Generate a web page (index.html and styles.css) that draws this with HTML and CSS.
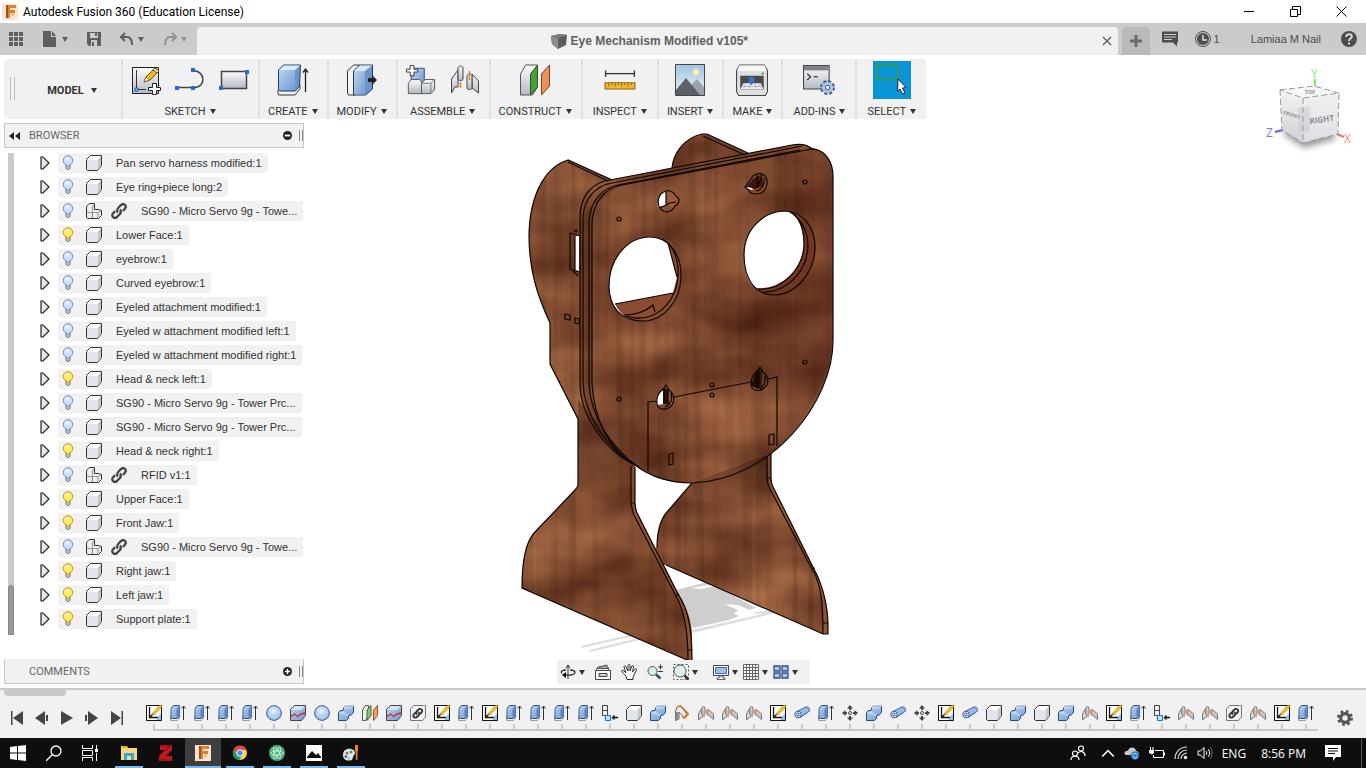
FILE: index.html
```html
<!DOCTYPE html>
<html lang="en">
<head>
    <meta charset="UTF-8">
    <title>Autodesk Fusion 360 (Education License)</title>
    <link rel="stylesheet" href="styles.css">
</head>
<body>
<svg class="sprite" aria-hidden="true">
    <defs>
        <linearGradient id="blue" x1="0" y1="0" x2="1" y2="1"><stop offset="0" stop-color="#bcd3ee"/><stop offset="1" stop-color="#6f9bd0"/></linearGradient>
        <linearGradient id="grey" x1="0" y1="0" x2="0" y2="1"><stop offset="0" stop-color="#fdfdfe"/><stop offset="1" stop-color="#b3b8c4"/></linearGradient>
        <linearGradient id="sky" x1="0" y1="0" x2="0" y2="1"><stop offset="0" stop-color="#9fc6e2"/><stop offset="1" stop-color="#eef4f8"/></linearGradient>
        <radialGradient id="ball" cx=".45" cy=".35" r=".6"><stop offset="0" stop-color="#f1f7ff"/><stop offset="1" stop-color="#8db3e0"/></radialGradient>
    </defs>

    <!-- app logo -->
    <symbol id="i-fusion" viewBox="0 0 16 16"><path d="M0 0h16v16H0z" fill="#fbe3cd"/><path d="M4 1h10v3H8v2h5v3H8v5H4z" fill="#d9822f"/><path d="M4 1h2v13H4z" fill="#9c5316"/><path d="M9 10l3-1v3h-3z" fill="#f3bb85"/></symbol>

    <!-- tab bar -->
    <symbol id="i-apps" viewBox="0 0 14 14"><path d="M0 0h4v4H0zM5 0h4v4H5zM10 0h4v4h-4zM0 5h4v4H0zM5 5h4v4H5zM10 5h4v4h-4zM0 10h4v4H0zM5 10h4v4H5zM10 10h4v4h-4z" fill="currentColor"/></symbol>
    <symbol id="i-file" viewBox="0 0 14 16"><path d="M0 0h8v6h5v10H0zM9 0l4 5H9z" fill="currentColor"/></symbol>
    <symbol id="i-save" viewBox="0 0 14 14"><path d="M0 0h14v14H2l-2-2z" fill="currentColor"/><path d="M3 1h8v5H3zM4 8h6v6H4z" fill="#cbcbcb"/><path d="M8 1h2v3H8zM5 10h2v4H5z" fill="currentColor"/></symbol>
    <symbol id="i-undo" viewBox="0 0 14 14"><path d="M5 1L1 5l4 4M1 5h6c4 0 5 3 5 8" fill="none" stroke="currentColor" stroke-width="2"/></symbol>
    <symbol id="i-redo" viewBox="0 0 14 14"><path d="M9 1l4 4-4 4M13 5H7c-4 0-5 3-5 8" fill="none" stroke="currentColor" stroke-width="2"/></symbol>
    <symbol id="i-comment" viewBox="0 0 16 15"><path d="M0 0h16v11h-1v4l-4-4H0z" fill="currentColor"/><path d="M2 3h12M2 5.500h12M2 8h8" stroke="#cbcbcb"/></symbol>
    <symbol id="i-clock" viewBox="0 0 16 16"><circle cx="8" cy="8" r="7.500" fill="none" stroke="currentColor"/><circle cx="8" cy="8" r="6" fill="currentColor"/><path d="M8 4v5h4" fill="none" stroke="#e3e3e3" stroke-width="1.500"/></symbol>
    <symbol id="i-help" viewBox="0 0 16 16"><circle cx="8" cy="8" r="8" fill="currentColor"/><path d="M5.200 6c0-4 5.800-3.500 5.600-.3C10.700 7.700 8 7.500 8 10" fill="none" stroke="#ddd" stroke-width="2"/><path d="M7 11.500h2v2H7z" fill="#ddd"/></symbol>
    <symbol id="i-cube" viewBox="0 0 16 16"><path d="M0 3l9-2 7 1-1 10-8 4-6-5z" fill="#5c5c5c"/><path d="M0 3l7 2v11l-6-5z" fill="#8d8d8d"/><path d="M0 3l9-2 7 1-9 3z" fill="#7b7b7b"/></symbol>

    <!-- ribbon -->
    <symbol id="i-newsketch" viewBox="0 0 30 30"><path d="M1.500 2.500h26v26h-26z" fill="url(#grey)" stroke="#222"/><path d="M5.500 5v19.500H15" fill="none" stroke="#333"/><path d="M4 23h3v3H4z" fill="#8fc0ff" stroke="#1560c0"/><path d="M13 17l2-5 9-9 4 3-9 9z" fill="#f5b915" stroke="#6b4a0e"/><path d="M24 3l4 3-2 2-4-3z" fill="#efe0d2" stroke="#6b4a0e"/><path d="M13 17l2-5 3 3z" fill="#fff" stroke="#6b4a0e" stroke-width=".600"/><path d="M21.500 18.500h4v4h4v3h-4v4h-4v-4h-4v-3h4z" fill="#fff" stroke="#222"/></symbol>
    <symbol id="i-line" viewBox="0 0 30 30"><path d="M2 22.500h17c12 0 12-16.500-1-17" fill="none" stroke="#444" stroke-width="1.500"/><path d="M0 21h4v4H0zM16 21h4v4h-4zM16 3h4v4h-4z" fill="#2f67d0"/></symbol>
    <symbol id="i-rect" viewBox="0 0 30 30"><path d="M2.500 6.500h25v17h-25z" fill="url(#grey)" stroke="#444" stroke-width="1.500"/><path d="M0 21h4v4H0zM26 5h4v4h-4z" fill="#2f67d0"/></symbol>
    <symbol id="i-extrude" viewBox="0 0 32 32"><path d="M1 26l4-5h18v4l-5 6H2l-1-1z" fill="#f0f0f0" stroke="#333"/><path d="M1.500 6l5-5h17l-1 21-4 5h-16l-1-1z" fill="#6d96c8" stroke="#233e68"/><path d="M2 6h16v20H2z" fill="url(#blue)"/><path d="M2 6l5-4.500h16L18 6z" fill="#dcebfa"/><path d="M28.500 28V6M26 8.500L28.500 5 31 8.500" fill="none" stroke="#222" stroke-width="1.300"/></symbol>
    <symbol id="i-presspull" viewBox="0 0 32 32"><path d="M1.500 7l6-6h6v26l-4 4h-7l-1-2z" fill="#f3f3f3" stroke="#333"/><path d="M7.500 7l6-6h13v24l-7 6h-12z" fill="#6d96c8" stroke="#233e68"/><path d="M8 7h11v23.500H8z" fill="url(#blue)"/><path d="M8 7l6-5.500h12L19 7z" fill="#dcebfa"/><path d="M22 14h4v-3l5 5-5 5v-3h-4z" fill="#222"/></symbol>
    <symbol id="i-component" viewBox="0 0 32 32"><path d="M5.500 7.500l3-4h11v13l-3 4h-11z" fill="url(#blue)" stroke="#2c4f86"/><path d="M2.500 19.500l3-4h9l3 4v11h-15z" fill="url(#grey)" stroke="#555"/><path d="M16.500 19.500l4-4h10v11l-4 4h-10z" fill="url(#grey)" stroke="#555"/><path d="M16.500 19.500h10l4-4M26.500 19.500v11" fill="none" stroke="#777"/><path d="M4.500.500h4v4h4v3h-4v4h-4v-4h-4v-3h4z" fill="#fff" stroke="#333"/></symbol>
    <symbol id="i-joint" viewBox="0 0 30 30"><path d="M1.500 14L8 5v17H5l-3.500 6z" fill="url(#grey)" stroke="#444"/><path d="M8 3c0-2.500 5-2.500 5 0v11c0 2-5 2-5 0z" fill="url(#grey)" stroke="#444"/><path d="M22 9l6.500 7v12L22 23z" fill="url(#grey)" stroke="#444"/><path d="M17 11c0-2.500 5-2.500 5 0v12c0 2-5 2-5 0z" fill="url(#grey)" stroke="#444"/><path d="M10.500 17v6M19.500 6v9" stroke="#f07a1a" stroke-width="1.500"/></symbol>
    <symbol id="i-planes" viewBox="0 0 32 32"><path d="M1.500 10l5-9h12v22l-5 8h-12z" fill="url(#grey)" stroke="#555"/><path d="M11.500 10l7-9v22l-7 8z" fill="#4c9a3c" stroke="#255c1c"/><path d="M22.500 10l8-9v21l-8 9z" fill="#e8925e" stroke="#8d3d17"/></symbol>
    <symbol id="i-measure" viewBox="0 0 30 30"><path d="M1.500 6v6M28.500 6v6M1.500 9h27" stroke="#333" stroke-width="1.300"/><path d="M1 17.500h28v6H1z" fill="#f0b92c" stroke="#8d6711"/><path d="M4.500 18v3M7.500 18v2M10.500 18v3M13.500 18v2M16.500 18v3M19.500 18v2M22.500 18v3M25.500 18v2" stroke="#8d6711"/></symbol>
    <symbol id="i-image" viewBox="0 0 30 32"><path d="M.500.500h29v31H.500z" fill="url(#sky)" stroke="#444"/><circle cx="21" cy="8" r="3" fill="#fff3c5" stroke="#ffe08a"/><path d="M15 22l7-7 7 8v8H16z" fill="#9ba2a9"/><path d="M1 26l10-12 14 17H1z" fill="#5b6069"/></symbol>
    <symbol id="i-printer" viewBox="0 0 30 30"><path d="M.500 6l3-5h23l3 5v20l-2 3.500h-25L.500 26z" fill="#dedfe1" stroke="#444"/><path d="M3 1.500h24l2 5H1z" fill="#f8f8f8"/><circle cx="25" cy="9" r="1" fill="#1a9a2a"/><path d="M4 11h22v13H4z" fill="#4a4a4a"/><path d="M7 18h16l3 6H4z" fill="#eee"/><path d="M9 19l-2 4M13 19l-1 4M18 19l1 4M21 19l3 4M6 21h18" stroke="#999" stroke-width=".600"/><path d="M12 12h5v5l-2.500 3-2.500-3z" fill="#3d73c6"/></symbol>
    <symbol id="i-script" viewBox="0 0 30 30"><path d="M.500 1.500h24v22H.500z" fill="url(#grey)" stroke="#444"/><path d="M1 2h23v4H1z" fill="#7b8088"/><path d="M4 9l3 3-3 3M10 12h4" fill="none" stroke="#222"/><circle cx="23" cy="22" r="5" fill="none" stroke="#3f5f8f" stroke-width="4" stroke-dasharray="2.500 1.400"/><circle cx="23" cy="22" r="4" fill="#eef3fa" stroke="#a9c0df" stroke-width="2.500"/><circle cx="23" cy="22" r="2" fill="#fff" stroke="#3f5f8f"/></symbol>
    <symbol id="i-select" viewBox="0 0 38 38"><path d="M4.500 4.500h20v14h-20z" fill="none" stroke="#3f9b1e" stroke-width="1.300"/><path d="M25 18l8 8.500-3.500.500 2.500 5-2.500 1-2.500-5-2.500 2.500z" fill="#fff" stroke="#222"/></symbol>

    <!-- browser tree -->
    <symbol id="i-arrow" viewBox="0 0 10 14"><path d="M1 1h2l6 6-6 6H1z" fill="#e6e6e6" stroke="#222" stroke-width="1.200"/></symbol>
    <symbol id="i-bulb" viewBox="0 0 12 16"><path d="M4 10h4v3c0 2-4 2-4 0z" fill="#c9c9c9" stroke="#555" stroke-width=".800"/><circle cx="6" cy="5.500" r="4.800"/><path d="M3.500 9l1 2h3l1-2"/><circle cx="5" cy="4" r="2" fill="#fff" stroke="none" opacity=".6"/></symbol>
    <symbol id="i-box" viewBox="0 0 16 16"><path d="M.500 4.500l4-4h11v10l-4 5h-10l-1-1z" fill="#fff" stroke="#333"/><path d="M1 5h10v10H1z" fill="#e1e4ea"/><path d="M11.500 5l3.500-4v9l-3.500 5z" fill="#c4c8d0"/></symbol>
    <symbol id="i-boxes" viewBox="0 0 16 16"><path d="M.500 3.500l3-3h5v6h4l3 1v5l-3 3H2l-1.500-1z" fill="#eceef2" stroke="#333"/><path d="M1 9.500h11l3-2M6.500 4v11M6.500 4l2-3M12 10v5" fill="none" stroke="#777" stroke-width=".800"/></symbol>
    <symbol id="i-link" viewBox="0 0 16 16"><path d="M7 9.500C5 7.500 6 6 8 4l2-2c3-2.500 6 1 4 3.500L12 8M9 6.500c2 2 1 3.500-1 5.500l-2 2c-3 2.500-6-1-4-3.500L4 8" fill="none" stroke="#444" stroke-width="2.300"/></symbol>
    <symbol id="i-collapse" viewBox="0 0 11 8"><path d="M5 0v8L0 4zM11 0v8L6 4z" fill="#222"/></symbol>
    <symbol id="i-minus" viewBox="0 0 10 10"><circle cx="5" cy="5" r="5" fill="#222"/><path d="M2 5h6" stroke="#fff" stroke-width="2"/></symbol>
    <symbol id="i-plus" viewBox="0 0 10 10"><circle cx="5" cy="5" r="5" fill="#222"/><path d="M2 5h6M5 2v6" stroke="#fff" stroke-width="1.500"/></symbol>

    <!-- navigation bar -->
    <symbol id="i-orbit" viewBox="0 0 16 16"><path d="M8 15V1M6 4l2-3 2 3" fill="none" stroke="#333"/><path d="M10 6c6 0 7 4 1 5-3 .500-6 0-8-.500M6 6C2 6 0 8 2 9.500" fill="none" stroke="#333" stroke-width="1.300"/><path d="M2 11l4-3v6z" fill="#111"/></symbol>
    <symbol id="i-lookat" viewBox="0 0 16 16"><path d="M.500 6.500h15v9H.500z" fill="#fff" stroke="#444"/><path d="M4 9.500h8v3H4z" fill="#c9d1dc" stroke="#444"/><path d="M1 6l2-3h10l1 3M4 3l8-2v2M2 4.500h11" fill="none" stroke="#555"/></symbol>
    <symbol id="i-pan" viewBox="0 0 16 16"><path d="M5 12L1 8c-1-2 1-2 2-1l2 2-2-6c0-2 2-1 2 0l2 4V1.500c0-1.500 2-1.500 2 0V7l2-5c1-1 2 0 1.500 1L11.500 8 14 5c1-1 2 0 1.500 1L12 13v2.500H6z" fill="#fff" stroke="#333"/></symbol>
    <symbol id="i-zoom" viewBox="0 0 16 16"><circle cx="5.500" cy="7" r="4.500" fill="#d9ecec" stroke="#555"/><path d="M9 10.500l4.500 4" stroke="#334d63" stroke-width="2.500"/><path d="M11 3h5M13.500.500v5M11 7.500h5" stroke="#333"/></symbol>
    <symbol id="i-fit" viewBox="0 0 16 16"><path d="M.500.500h15v15H.500z" fill="none" stroke="#555" stroke-dasharray="2 2"/><circle cx="7" cy="7" r="6" fill="#e1efef" stroke="#555"/><path d="M11.500 11.500l4 4" stroke="#333" stroke-width="2.500"/></symbol>
    <symbol id="i-display" viewBox="0 0 16 16"><path d="M.500 1.500h15v10H.500z" fill="#fff" stroke="#445"/><path d="M2.500 3.500h11v6h-11z" fill="#9dbfe8" stroke="#3c69a5"/><path d="M6 12h4v2h2v1.500H4V14h2z" fill="#eee" stroke="#445" stroke-width=".800"/></symbol>
    <symbol id="i-grid" viewBox="0 0 16 16"><path d="M.500.500h15v15H.500zM3.500 0v16M6.500 0v16M9.500 0v16M12.500 0v16M0 3.500h16M0 6.500h16M0 9.500h16M0 12.500h16" fill="#fff" stroke="#666"/></symbol>
    <symbol id="i-views" viewBox="0 0 16 14"><path d="M1 1h6v5H1zM9 1h6v5H9zM1 8h6v5H1zM9 8h6v5H9z" fill="#a9c4e6" stroke="#334f7c" stroke-width="1.300"/></symbol>

    <!-- timeline -->
    <symbol id="t-sketch" viewBox="0 0 16 16"><path d="M.500.500h15v15H.500z" fill="#fff" stroke="#111"/><path d="M10 15l5-7v7z" fill="#9db9e8"/><path d="M3.500 2v10.500H12M3.500 12.500l4-4" fill="none" stroke="#111" stroke-width="1.300"/><path d="M6 10l1.500-3L14 0l2 1.500L9 9z" fill="#f8c21c" stroke="#b57b0f" stroke-width=".600"/></symbol>
    <symbol id="t-extrude" viewBox="0 0 16 16"><path d="M.500 12l1-2h8v3l-2 2.500h-7z" fill="#f2f2f2" stroke="#777" stroke-width=".700"/><path d="M1 3.500L3.500.500h6V11l-2 2.500H1z" fill="url(#blue)" stroke="#365b92"/><path d="M6.500 4l3-3v9l-3 3z" fill="#5e87bd"/><path d="M13.500 15V1M11.500 3.500l2-2.500 2 2.500" fill="none" stroke="#333"/></symbol>
    <symbol id="t-sphere" viewBox="0 0 16 16"><circle cx="8" cy="8" r="7.400" fill="url(#ball)" stroke="#3f639b"/><circle cx="8" cy="8" r="5" fill="none" stroke="#c8dcf5"/></symbol>
    <symbol id="t-split" viewBox="0 0 16 16"><path d="M.500 4.500l4-4h11v10l-4 5H.500z" fill="url(#blue)" stroke="#444"/><path d="M1 5l4-4h10l-4 4z" fill="#d7e6f7"/><path d="M.500 12l4-3 3 2.500L11 9l4.500-1" fill="none" stroke="#e0201c" stroke-width="1.300"/></symbol>
    <symbol id="t-combine" viewBox="0 0 16 16"><path d="M.500 7.500l2-2h3v-3l2-2h8v7l-3 3h-2v3l-2 2h-8z" fill="url(#blue)" stroke="#28497d"/><path d="M5.500 5.500v3l5 2M7.500.500h8l-2 2.500h-8zM1 8h4" fill="none" stroke="#e4effb" stroke-width=".800"/></symbol>
    <symbol id="t-planes" viewBox="0 0 16 16"><path d="M.500 5l3-4.500h3v10l-3 5h-3z" fill="#eee" stroke="#555"/><path d="M5 5l4-4.500v10l-4 5z" fill="#8fbd84" stroke="#3b6a32"/><path d="M11.500 5l4-4.500v10l-4 5z" fill="#eda277" stroke="#a0501f"/></symbol>
    <symbol id="t-link" viewBox="0 0 16 16"><path d="M.500 4l3-3.500h12V12l-3 3.500H.500z" fill="#f3f3f3" stroke="#777"/><path d="M7 9.500C5.500 8 6 7 7.500 5.500S11 3 12 5s-1 3-2 4M8.500 7c1.500 1.500 1 2.500-.500 4s-3.500 2.500-4.500.500 1-3 2-4" fill="none" stroke="#333" stroke-width="1.800"/></symbol>
    <symbol id="t-align" viewBox="0 0 16 16"><path d="M.500.500h5v10h-5zM.500 5.500h5" fill="#eef3f3" stroke="#444"/><path d="M3.500 10.500h5v5h-5z" fill="#bfe2fb" stroke="#0f74c4"/><path d="M10 12.500h6M12.500 10.500l-2 2 2 2" fill="none" stroke="#111" stroke-width="1.300"/></symbol>
    <symbol id="t-joint" viewBox="0 0 16 16"><path d="M.500 9L4 2.500c1-1.500 3-1 3 .500v6L5 11l-4.500 4z" fill="#d2d5da" stroke="#777"/><path d="M9 6c0-1.500 2.500-1.500 3 0l3.500 3v5.500L11.500 11 9 9.500z" fill="#c2c6cd" stroke="#777"/><path d="M4 4v6" stroke="#666"/><path d="M6 9v3M9.500 4v4" stroke="#f07a1a" stroke-width="1.300"/></symbol>
    <symbol id="t-jointhl" viewBox="0 0 16 16"><path d="M3 4l3-2 7 7-4 4" fill="none" stroke="#f08a1c" stroke-width="4" stroke-linejoin="round"/><path d="M3 3c1-2 4-2 5 0l5 6-3 3.500L5 7v7l-3.500 1.500V6z" fill="#ececec" stroke="#666"/><path d="M1.500 7h3v7l-3 1z" fill="#888"/></symbol>
    <symbol id="t-pipe" viewBox="0 0 16 16"><path d="M3 6.500L12 2c3-.500 5 3 2.500 5L6 12.500z" fill="url(#blue)" stroke="#3b5f96"/><ellipse cx="4" cy="9.500" rx="3.200" ry="3.300" fill="#dce9f8" stroke="#3b5f96"/><ellipse cx="4" cy="9.500" rx="1.200" ry="1.400" fill="#fff" stroke="#3b5f96"/></symbol>
    <symbol id="t-move" viewBox="0 0 16 16"><path d="M8 0l3 3.500H9V5H7V3.500H5zM8 16l-3-3.500h2V11h2v1.500h2zM0 8l3.500-3v2H5v2H3.500v2zM16 8l-3.500 3V9H11V7h1.500V5z" fill="#444"/><circle cx="8" cy="8" r="1.500" fill="#fff" stroke="#444"/></symbol>
    <symbol id="t-first" viewBox="0 0 14 14"><path d="M1 0h1.500v14H1zM13 0v14L3 7z" fill="currentColor"/></symbol>
    <symbol id="t-prev" viewBox="0 0 14 14"><path d="M10 0v14L0 7zM11 4h2v6h-2z" fill="currentColor"/></symbol>
    <symbol id="t-play" viewBox="0 0 14 14"><path d="M1 0l12 7-12 7z" fill="currentColor"/></symbol>
    <symbol id="t-next" viewBox="0 0 14 14"><path d="M3 0v14l10-7zM0 4h2v6H0z" fill="currentColor"/></symbol>
    <symbol id="t-last" viewBox="0 0 14 14"><path d="M11.500 0H13v14h-1.500zM1 0v14l10-7z" fill="currentColor"/></symbol>
    <symbol id="i-gear" viewBox="0 0 16 16"><circle cx="8" cy="8" r="6.500" fill="none" stroke="#555" stroke-width="3" stroke-dasharray="2.600 2.500"/><circle cx="8" cy="8" r="4.300" fill="none" stroke="#555" stroke-width="3.200"/></symbol>

    <!-- taskbar -->
    <symbol id="w-start" viewBox="0 0 16 16"><path d="M0 2l7-1v6.500H0zM8 .900L16 0v7.500H8zM0 8.500h7V15l-7-1zM8 8.500h8V16l-8-1z" fill="#fff"/></symbol>
    <symbol id="w-search" viewBox="0 0 16 16"><circle cx="10" cy="6" r="5" fill="none" stroke="#fff" stroke-width="1.300"/><path d="M6.500 9.500L0 16" stroke="#fff" stroke-width="1.300"/></symbol>
    <symbol id="w-task" viewBox="0 0 16 16"><path d="M.500 0v3.500h10V0M.500 16v-3.500h10V16M.500 5.500h10v5H.500zM14.500 0v4M14.500 8v8" fill="none" stroke="#fff"/><path d="M13 4h3v3h-3z" fill="#fff"/></symbol>
    <symbol id="w-explorer" viewBox="0 0 16 16"><path d="M0 1h6l1 2h9v12H0z" fill="#ffd978"/><path d="M1 1h5v2H1z" fill="#e8a92d"/><path d="M3 8h10v7h-3v-4H6v4H3z" fill="#35a5e6"/></symbol>
    <symbol id="w-z" viewBox="0 0 14 16"><path d="M1 0h12v5l-6 6h6v5H0v-5l6-6H1z" fill="#c4161c"/><path d="M1 1h11l-6 5M1 15h11" fill="none" stroke="#6d0d10" stroke-width=".800"/></symbol>
    <symbol id="w-chrome" viewBox="0 0 16 16"><circle cx="8" cy="8" r="7" fill="#ffcd40"/><path d="M1.500 5A7 7 0 0 1 14.500 5H8L5 9z" fill="#dd4b3e"/><path d="M1.500 5a7 7 0 0 0 6 10L10 10l-5-1z" fill="#1aa260"/><circle cx="8" cy="8" r="3.300" fill="#4a8af4" stroke="#fff"/></symbol>
    <symbol id="w-atom" viewBox="0 0 16 16"><circle cx="8" cy="8" r="8" fill="#4fae79"/><g fill="none" stroke="#cdf0dc" stroke-width=".900"><ellipse cx="8" cy="8" rx="6" ry="2.200"/><ellipse cx="8" cy="8" rx="6" ry="2.200" transform="rotate(60 8 8)"/><ellipse cx="8" cy="8" rx="6" ry="2.200" transform="rotate(120 8 8)"/></g></symbol>
    <symbol id="w-photos" viewBox="0 0 16 16"><path d="M0 0h16v16H0z" fill="#fff"/><path d="M1 12l5-6 4 4 2-2 3 4v1H1z" fill="#0e0e0e"/></symbol>
    <symbol id="w-paint" viewBox="0 0 16 16"><path d="M0 10c0-5 4-7 8-6s5 4 3 6 0 5-4 5.500S0 14 0 10z" fill="#d8ecf8"/><circle cx="4" cy="8" r="1.500" fill="#e84c30"/><circle cx="8" cy="7" r="1.500" fill="#3aa648"/><circle cx="3" cy="11.500" r="1.500" fill="#2d7fd0"/><circle cx="6" cy="13.500" r="1.300" fill="#f3b51e"/><path d="M12 0h3v6h-3zM12.500 6h2v9h-1.500z" fill="#e8832a"/></symbol>
    <symbol id="w-people" viewBox="0 0 16 16"><g fill="none" stroke="#fff" stroke-width="1.200"><circle cx="11" cy="3.500" r="2.500"/><path d="M8 8c3-3 7-1 7 3"/><circle cx="5" cy="8.500" r="2.500"/><path d="M1 15c0-5 8-5 8 0"/></g></symbol>
    <symbol id="w-up" viewBox="0 0 12 8"><path d="M1 7l5-5 5 5" fill="none" stroke="#fff" stroke-width="1.300"/></symbol>
    <symbol id="w-cloud" viewBox="0 0 16 14"><path d="M2 9C-1 8 1 4 4 5c1-5 8-4 8 0 3 0 4 4 1 4z" fill="#c9c9c9"/><circle cx="11" cy="9.500" r="4.200" fill="#2a7fd4"/><path d="M9 9c.500-2 3-2 4 0M13 10.500c-.500 2-3 2-4 0" fill="none" stroke="#fff"/></symbol>
    <symbol id="w-battery" viewBox="0 0 16 12"><path d="M6 3.500h8.500v7H4.500V8M15.500 5.500v3" fill="none" stroke="#fff"/><path d="M0 3h5v3L3 7.500 0 6zM1 0h1v3H1zM3.500 0h1v3h-1z" fill="#fff"/></symbol>
    <symbol id="w-wifi" viewBox="0 0 14 14"><g fill="none" stroke="#ddd" stroke-width="1.200"><path d="M1 13C1 6 6 1 13 1M4 13c0-5 4-9 9-9M7 13c0-3 3-6 6-6"/></g><circle cx="11.500" cy="11.500" r="1.700" fill="#fff"/></symbol>
    <symbol id="w-sound" viewBox="0 0 16 14"><path d="M1 5h2.500L7 1.500v11L3.500 9H1z" fill="none" stroke="#fff"/><path d="M9 5c1 1 1 3 0 4M11 3c2 2 2 6 0 8" fill="none" stroke="#fff"/><path d="M13.500 1.500c2 3 2 8 0 11" fill="none" stroke="#777"/></symbol>
    <symbol id="w-note" viewBox="0 0 16 16"><path d="M0 0h16v12h-5l-3 4v-4H0z" fill="#fff"/><path d="M3 3.500h10M3 6h10M3 8.500h7" stroke="#111"/></symbol>
</svg>

<header class="titlebar">
    <svg class="logo"><use href="#i-fusion"/></svg>
    <h1>Autodesk Fusion 360 (Education License)</h1>
    <div class="win-buttons">
        <button aria-label="Minimize"><svg viewBox="0 0 11 11"><path d="M0 5.500h10"/></svg></button>
        <button aria-label="Restore"><svg viewBox="0 0 11 11"><path d="M.500 3.500h7v7h-7zM2.500 3.500v-3h8v8h-3"/></svg></button>
        <button aria-label="Close"><svg viewBox="0 0 11 11"><path d="M.500.500l10 10M10.500.500l-10 10"/></svg></button>
    </div>
</header>

<nav class="tabbar">
    <div class="quick">
        <button aria-label="Data panel"><svg class="s14"><use href="#i-apps"/></svg></button>
        <button aria-label="File"><svg class="s16"><use href="#i-file"/></svg><i class="caret"></i></button>
        <button aria-label="Save"><svg class="s14"><use href="#i-save"/></svg></button>
        <button aria-label="Undo"><svg class="s14"><use href="#i-undo"/></svg><i class="caret"></i></button>
        <button class="off" aria-label="Redo"><svg class="s14"><use href="#i-redo"/></svg><i class="caret"></i></button>
    </div>
    <div class="tab">
        <span class="tab-title"><svg class="s16"><use href="#i-cube"/></svg>Eye Mechanism Modified v105*</span>
        <button aria-label="Close tab"><svg viewBox="0 0 10 10"><path d="M1 1l8 8M9 1L1 9"/></svg></button>
    </div>
    <button class="new-tab" aria-label="New design"><svg viewBox="0 0 14 14"><path d="M7 1v12M1 7h12"/></svg></button>
    <div class="account">
        <button aria-label="Comments"><svg class="s16"><use href="#i-comment"/></svg></button>
        <button class="jobs"><svg class="s16"><use href="#i-clock"/></svg>1</button>
        <button class="user">Lamiaa M Nail</button>
        <button aria-label="Help"><svg class="s16"><use href="#i-help"/></svg></button>
    </div>
</nav>

<main class="workspace">
    <div class="toolbar">
        <span class="grip"></span>
        <button class="model">MODEL<i class="caret"></i></button>
        <div class="group wide">
            <div class="icons"><svg><use href="#i-newsketch"/></svg><svg><use href="#i-line"/></svg><svg><use href="#i-rect"/></svg></div>
            <button>SKETCH<i class="caret"></i></button>
        </div>
        <div class="group">
            <div class="icons"><svg><use href="#i-extrude"/></svg></div>
            <button>CREATE<i class="caret"></i></button>
        </div>
        <div class="group">
            <div class="icons"><svg><use href="#i-presspull"/></svg></div>
            <button>MODIFY<i class="caret"></i></button>
        </div>
        <div class="group wide">
            <div class="icons"><svg><use href="#i-component"/></svg><svg><use href="#i-joint"/></svg></div>
            <button>ASSEMBLE<i class="caret"></i></button>
        </div>
        <div class="group">
            <div class="icons"><svg><use href="#i-planes"/></svg></div>
            <button>CONSTRUCT<i class="caret"></i></button>
        </div>
        <div class="group roomy">
            <div class="icons"><svg><use href="#i-measure"/></svg></div>
            <button>INSPECT<i class="caret"></i></button>
        </div>
        <div class="group">
            <div class="icons"><svg><use href="#i-image"/></svg></div>
            <button>INSERT<i class="caret"></i></button>
        </div>
        <div class="group">
            <div class="icons"><svg><use href="#i-printer"/></svg></div>
            <button>MAKE<i class="caret"></i></button>
        </div>
        <div class="group roomy">
            <div class="icons"><svg><use href="#i-script"/></svg></div>
            <button>ADD-INS<i class="caret"></i></button>
        </div>
        <div class="group roomy">
            <div class="icons"><svg class="active"><use href="#i-select"/></svg></div>
            <button>SELECT<i class="caret"></i></button>
        </div>
    </div>

    <svg class="viewcube" viewBox="1264 66 90 90">
        <defs>
            <linearGradient id="cube-l" x1="0" y1="0" x2="0" y2="1"><stop offset="0" stop-color="#f2f3f5"/><stop offset="1" stop-color="#cfd1d4"/></linearGradient>
            <linearGradient id="cube-r" x1="0" y1="0" x2="0" y2="1"><stop offset="0" stop-color="#f0f1f3"/><stop offset="1" stop-color="#dcdee1"/></linearGradient>
            <filter id="soft" x="-30%" y="-30%" width="160%" height="160%"><feGaussianBlur stdDeviation="3"/></filter>
        </defs>
        <path d="M1283 134l21 14 32-9-6-12-40-4z" fill="#999" filter="url(#soft)"/>
        <path d="M1315 79v8" stroke="#6ff06f" stroke-width="2"/>
        <path d="M1275 132l8-2" stroke="#5a5af0" stroke-width="2"/>
        <path d="M1337 134l7 3" stroke="#f07070" stroke-width="2"/>
        <path d="M1280 90l34-4 25 7-36 5z" fill="#f6f7f8"/>
        <path d="M1280 90l23 8v45l-21-13z" fill="url(#cube-l)"/>
        <path d="M1303 98l36-5-1 41-35 9z" fill="url(#cube-r)"/>
        <path d="M1298 107l5 1v25l-5-3zM1303 107l7-1v26l-7 2z" fill="#c9ced4" opacity=".6"/>
        <path d="M1280 90l34-4 25 7-36 5zl2 40 21 13 35-9 1-41M1303 98v45" fill="none" stroke="#999" stroke-dasharray="6 3"/>
        <text x="1283" y="114" class="face small" transform="rotate(18 1283 114)">FRONT</text>
        <text x="1310" y="124" class="face" transform="rotate(-8 1310 124)">RIGHT</text>
        <text x="1305" y="94" class="face small">TOP</text>
        <text x="1311" y="78" class="axis" fill="#7df07d">Y</text>
        <text x="1266" y="137" class="axis" fill="#7a7af5">Z</text>
        <text x="1344" y="143" class="axis" fill="#f58a8a">X</text>
    </svg>

    <section class="viewport">
        <svg class="scene" viewBox="515 130 336 530">
            <defs>
                <filter id="wood" x="0" y="0" width="100%" height="100%" color-interpolation-filters="sRGB">
                    <feTurbulence type="fractalNoise" baseFrequency=".01 .018" numOctaves="3" seed="8"/>
                    <feColorMatrix values=".5 0 0 0 .25  .4 0 0 0 .09  .28 0 0 0 .045  0 0 0 0 1" result="tone"/>
                    <feTurbulence type="fractalNoise" baseFrequency=".13 .003" numOctaves="2" seed="3"/>
                    <feColorMatrix values=".4 0 0 0 .77  .4 0 0 0 .77  .4 0 0 0 .77  0 0 0 0 1" result="grain"/>
                    <feBlend in="tone" in2="grain" mode="multiply"/>
                    <feComposite in2="SourceGraphic" operator="in"/>
                </filter>
                <linearGradient id="neck" x1="0" y1="0" x2="0" y2="1"><stop offset="0" stop-color="#3b1a10" stop-opacity=".45"/><stop offset="1" stop-color="#3b1a10" stop-opacity="0"/></linearGradient>
                <linearGradient id="side" x1="0" y1="0" x2="1" y2="0"><stop offset="0" stop-color="#4a1a14" stop-opacity="0"/><stop offset="1" stop-color="#4a1a14" stop-opacity=".4"/></linearGradient>
            </defs>

            <!-- shadow on the floor -->
            <g fill="#cecece">
                <path d="M676 590l31-8 6 2-22 4 10 1 15-3 40 22-7 2-11-5-14-1 14 6-4 4 5 2-10 4-36 8-8-16z"/>
                <path d="M581 646l56-13 1 2-56 13zM589 650l54-13 1 2-54 13zM692 630l78-18 1 2-78 19zM750 613l68-10 14 1-60 10z" opacity=".7"/>
            </g>

            <g filter="url(#wood)">
                <path d="M672 168C673 155 683 138 702 134h5l41 19v20z"/>
                <path d="M692 483l-25 29c-7 8-10 21-10 36h-5l10 17h4l157 69h5v-9c0-12-3-36-14-56l-41-82q-2-4-2-9v-35z"/>
                <path d="M568 160C548 166 530 190 529 235c0 35 8 60 21 88v41l28 55v66q0 2-3 5l-40 42c-8 8-13 25-13 56l165 72h5v-25c0-12-5-28-14-42l-41-81q-2-4-2-9v-40l-15-280z"/>
                <path d="M580 383V215c1-20 13-33 30-35l182-35c11-2 16 0 20 3 14 1 21 14 21 27v165c0 60-60 140-141 143-22 0-40-5-57-18-30-14-52-50-55-82z"/>
            </g>

            <!-- shading -->
            <path d="M578 400l57 66v50l-57-25z" fill="url(#neck)"/>
            <path d="M692 483l75-28 4-3v33l5 30-84-20z" fill="url(#neck)"/>
            <path d="M833 175v165c-2 40-38 102-80 132V157l55-9c17 0 25 12 25 27z" fill="url(#side)"/>
            <path d="M580 215v168c3 32 25 68 55 82-30-27-43-50-43-82V215c0-14 10-26 30-30z" fill="#3a160d" opacity=".25"/>
            <path d="M631 467h4v36l2 10 41 81c9 14 14 30 14 42v24h-4v-12c0-20-4-34-12-52l-42-82q-3-5-3-11zM767 456l4-3v25l2 9 41 82c9 16 14 34 14 56v9h-5c0-28-1-44-11-65l-43-82z" fill="#a4603b" opacity=".5"/>

            <!-- openings -->
            <g fill="#fff">
                <path d="M609 286c0-27 18-49 41-49 18 0 31 16 31 38 0 27-18 46-38 46-22 0-34-14-34-35z"/>
                <path d="M744 255c0-27 21-44 41-44 12 1 19 17 19 34-1 25-24 45-46 44-10-4-14-17-14-34z"/>
                <path d="M666 192v13l-8 2c-1-8 2-14 8-15zM664 390v14l-7 1c-1-8 2-13 7-15z"/>
                <path d="M575 236h4v35l-4-1z"/>
            </g>
            <path d="M615 304l58-11 4-16-9-34-5-4c11 2 18 16 18 36 0 27-18 46-38 46-13 0-22-5-28-17z" fill="#8a4d31"/>
            <path d="M789 211c19 2 26 18 26 36 0 26-20 48-41 48-8 0-13-3-17-7 23 2 45-17 47-43 0-15-5-30-15-34z" fill="#6e3623"/>
            <path d="M666 192v13l7 3 5-7c0-4-2-7-5-7-2-2-5-3-7-2z" fill="#9b5b3a"/>
            <path d="M746 187l7-8 9-5 1 12-8 3z" fill="#3a1710"/>
            <path d="M746 187l6 1 1 2-5-1z" fill="#fff"/>
            <path d="M751 386l5-15 4-2v20z" fill="#1b0c08"/>
            <path d="M663 388l5 1v15h-5z" fill="#2a130c"/>

            <g fill="none" stroke="#0c0604" stroke-width="1.200">
                <!-- side plates and legs -->
                <path d="M672 168C673 155 683 138 702 134h5l41 19M703 136l42 19"/>
                <path d="M612 180l-44-20c-20 6-38 30-39 75 0 35 8 60 21 88v41l28 55v66q0 2-3 5l-40 42c-8 8-13 25-13 56l165 72M608 181l-40-19"/>
                <path d="M631 466v34q0 7 3 15l42 81c8 14 12 32 12 64M635 467v36q0 5 2 10l41 81c9 14 14 30 14 66M631 503h4M676 596l3-2M688 650h4"/>
                <path d="M692 483l-25 29c-7 8-10 21-10 36M666 565l157 69h5v-9c0-12-3-36-14-56l-41-82q-2-4-2-9v-25M767 456v22q0 5 2 9l43 82c9 14 11 34 11 65M767 478h4M812 569l3-1M823 623h5"/>
                <!-- front plates -->
                <path d="M580 383V215c1-20 13-33 30-35l182-35c11-2 16 0 20 4"/>
                <path d="M583 383V217c1-18 12-31 29-34l190-37"/>
                <path d="M580 383c0 32 25 68 55 82M583 383c1 32 25 67 52 82M589 383c1 32 22 66 50 84"/>
                <path d="M589 383V221c1-18 12-33 29-36l182-35"/>
                <path d="M592 383V223c1-20 12-35 30-38l190-36c14 1 21 14 21 27v165c0 60-60 139-141 142-22 0-40-5-57-18-28-16-41-48-43-82z"/>
                <!-- eyes -->
                <path d="M609 286c0-27 18-49 41-49 18 0 31 16 31 38 0 27-18 46-38 46-22 0-34-14-34-35z"/>
                <path d="M615 304l58-11M668 243l9 34M663 239c18 12 19 42 8 60-10 16-27 23-45 17M624 315c12 0 22-4 29-10l2 7"/>
                <path d="M744 255c0-27 21-44 41-44 18 1 30 16 30 36 0 26-20 48-41 48-20 0-30-18-30-40z"/>
                <path d="M790 212c10 5 14 17 14 33-1 25-23 46-46 44M793 214c16 12 18 34 11 50-8 18-24 28-40 28"/>
                <!-- servo mounts -->
                <path d="M666 191c5-1 8 2 9 4l4 4c0 4-1 6-4 7-2 4-5 6-9 6-11-2-10-19 0-21zM666 192v13M660 208l10-5 6-1"/>
                <path d="M745 187l8-11c8-6 15 0 14 8-1 6-5 10-11 10-5 0-7-2-7-4zM757 174v10M762 178l-6 10M764 178c1 6-2 12-8 13"/>
                <path d="M657 404c-1-8 2-12 6-15l3-4 3 5c6 4 6 12 2 16-5 5-13 4-14-2zM664 388v15M668 390v14M671 393c2 6 0 11-6 14"/>
                <path d="M751 385c0-8 3-11 6-14l3-4 3 5c6 4 6 12 2 15-5 6-13 4-14-2zM757 371v18M761 370v18M765 376c1 6-1 10-5 13"/>
                <path d="M648 471v-69l9-1M674 397l77-15M768 379l9-2v69"/>
                <circle cx="619" cy="219" r="2"/><circle cx="805" cy="182" r="2"/>
                <circle cx="805" cy="362" r="2"/><circle cx="619" cy="399" r="2"/>
                <circle cx="712" cy="385" r="2"/><circle cx="712" cy="395" r="2"/>
                <path d="M669 454l4-1v11l-4 1zM769 435l5-1v10l-5 1z"/>
                <path d="M580 236l-10-3v36l9 3M575 236v34M573 271l5 5M565 314l5 1v5l-5-1zM575 318l4 1v5l-4-1z"/>
                <circle cx="576" cy="231" r="1"/>
            </g>
        </svg>
        <div class="navbar">
            <button aria-label="Orbit"><svg class="s16"><use href="#i-orbit"/></svg><i class="caret"></i></button>
            <button aria-label="Look at"><svg class="s16"><use href="#i-lookat"/></svg></button>
            <button aria-label="Pan"><svg class="s16"><use href="#i-pan"/></svg></button>
            <button aria-label="Zoom"><svg class="s16"><use href="#i-zoom"/></svg></button>
            <button aria-label="Fit"><svg class="s16"><use href="#i-fit"/></svg><i class="caret"></i></button>
            <span class="space"></span>
            <button class="tight" aria-label="Display settings"><svg class="s16"><use href="#i-display"/></svg><i class="caret"></i></button>
            <button class="tight" aria-label="Grid and snaps"><svg class="s16"><use href="#i-grid"/></svg><i class="caret"></i></button>
            <button class="tight" aria-label="Viewports"><svg class="s16"><use href="#i-views"/></svg><i class="caret"></i></button>
        </div>
    </section>

    <aside class="panel">
        <div class="panel-head">
            <button aria-label="Collapse"><svg class="collapse"><use href="#i-collapse"/></svg></button>
            <h2>BROWSER</h2>
            <button aria-label="Hide"><svg class="dot"><use href="#i-minus"/></svg></button>
            <span class="handle"></span>
        </div>
        <div class="tree">
            <div class="scroll"><div class="thumb"></div></div>
            <ul id="tree"></ul>
        </div>
        <div class="panel-head comments">
            <h2>COMMENTS</h2>
            <button aria-label="Add comment"><svg class="dot"><use href="#i-plus"/></svg></button>
            <span class="handle"></span>
        </div>
    </aside>
</main>

<section class="timeline">
    <div class="slider"></div>
    <div class="track">
        <div class="player">
            <button aria-label="Go to start"><svg class="s14"><use href="#t-first"/></svg></button>
            <button aria-label="Step back"><svg class="s14"><use href="#t-prev"/></svg></button>
            <button aria-label="Play"><svg class="s14"><use href="#t-play"/></svg></button>
            <button aria-label="Step forward"><svg class="s14"><use href="#t-next"/></svg></button>
            <button aria-label="Go to end"><svg class="s14"><use href="#t-last"/></svg></button>
        </div>
        <ol id="features"></ol>
        <button class="settings" aria-label="Timeline settings"><svg class="s16"><use href="#i-gear"/></svg></button>
    </div>
</section>

<footer class="taskbar">
    <div class="apps">
        <button aria-label="Start"><svg class="s16"><use href="#w-start"/></svg></button>
        <button aria-label="Search"><svg class="s16"><use href="#w-search"/></svg></button>
        <button aria-label="Task view"><svg class="s16"><use href="#w-task"/></svg></button>
    </div>
    <div class="apps pinned">
        <button class="open" aria-label="File Explorer"><svg class="s16"><use href="#w-explorer"/></svg></button>
        <button aria-label="Zotero"><svg class="s16"><use href="#w-z"/></svg></button>
        <button class="open current" aria-label="Fusion 360"><svg class="s16"><use href="#i-fusion"/></svg></button>
        <button class="open" aria-label="Chrome"><svg class="s16"><use href="#w-chrome"/></svg></button>
        <button class="open" aria-label="Atom"><svg class="s16"><use href="#w-atom"/></svg></button>
        <button class="open" aria-label="Photos"><svg class="s16"><use href="#w-photos"/></svg></button>
        <button class="open" aria-label="Paint"><svg class="s16"><use href="#w-paint"/></svg></button>
    </div>
    <div class="tray">
        <svg class="s16 people"><use href="#w-people"/></svg>
        <svg class="s14"><use href="#w-up"/></svg>
        <svg class="s16"><use href="#w-cloud"/></svg>
        <svg class="s16"><use href="#w-battery"/></svg>
        <svg class="s14"><use href="#w-wifi"/></svg>
        <svg class="s16"><use href="#w-sound"/></svg>
        <span class="lang">ENG</span>
        <time>8:56 PM</time>
        <button aria-label="Notifications"><svg class="s16"><use href="#w-note"/></svg></button>
        <span class="peek"></span>
    </div>
</footer>

<script>
    // name, visible, linked
    var parts = [
        ["Pan servo harness modified:1", 0, 0],
        ["Eye ring+piece long:2", 0, 0],
        ["SG90 - Micro Servo 9g - Towe...", 0, 1],
        ["Lower Face:1", 1, 0],
        ["eyebrow:1", 0, 0],
        ["Curved eyebrow:1", 0, 0],
        ["Eyeled attachment modified:1", 0, 0],
        ["Eyeled w attachment modified left:1", 0, 0],
        ["Eyeled w attachment modified right:1", 0, 0],
        ["Head & neck left:1", 1, 0],
        ["SG90 - Micro Servo 9g - Tower Prc...", 0, 0],
        ["SG90 - Micro Servo 9g - Tower Prc...", 0, 0],
        ["Head & neck right:1", 1, 0],
        ["RFID v1:1", 0, 1],
        ["Upper Face:1", 1, 0],
        ["Front Jaw:1", 1, 0],
        ["SG90 - Micro Servo 9g - Towe...", 0, 1],
        ["Right jaw:1", 1, 0],
        ["Left jaw:1", 1, 0],
        ["Support plate:1", 1, 0]
    ];
    var features = "sketch extrude extrude extrude extrude sphere split sphere combine planes split link sketch extrude " +
        "sketch extrude extrude extrude extrude align box combine jointhl joint joint joint sketch pipe extrude move " +
        "combine pipe move sketch pipe box combine box combine joint sketch extrude align joint joint link joint sketch extrude";

    function icon(id, cls){
        return '<svg class="' + cls + '"><use href="#' + id + '"/></svg>';
    }

    var html = "";
    for(var i = 0; i < parts.length; i++){
        var p = parts[i];
        html += '<li>' + icon("i-arrow", "twisty") + '<div class="node">' +
            icon("i-bulb", p[1] ? "bulb on" : "bulb") +
            icon(p[2] ? "i-boxes" : "i-box", "s16") +
            (p[2] ? icon("i-link", "s16 chain") : "") +
            '<span>' + p[0].replace("&", "&amp;") + '</span></div></li>';
    }
    document.getElementById("tree").innerHTML = html;

    html = "";
    features.split(" ").forEach(function(name){
        html += '<li>' + icon(name == "box" ? "i-box" : "t-" + name, "s16") + '</li>';
    });
    document.getElementById("features").innerHTML = html;
</script>
</body>
</html>
```
FILE: styles.css
```css
*{
    margin:0;
    padding:0;
    box-sizing: border-box;
}
body{
    min-height:100vh;
    display: flex;
    flex-direction: column;
    background: #fff;
    color: #333;
    font: 11px "Liberation Sans", Arial, sans-serif;
    overflow: hidden;
}
ul,ol{
    list-style: none;
}
button{
    display: flex;
    align-items: center;
    border: 0;
    background: none;
    color: inherit;
    font: inherit;
}
svg{
    display: block;
    flex: none;
}
.sprite{
    position: absolute;
    width:0;
    height:0;
}
.s14{
    width:14px;
    height:14px;
}
.s16{
    width:16px;
    height:16px;
}
.caret{
    border: 3px solid transparent;
    border-top: 5px solid currentColor;
    border-bottom: 0;
    margin-left:4px;
}

/* window title */
.titlebar{
    height:23px;
    display: flex;
    align-items: center;
    padding:0 2px;
    color: #000;
}
.logo{
    width:16px;
    height:16px;
}
.titlebar h1{
    margin-left:5px;
    font: 12px Roboto, "Open Sans", sans-serif;
}
.win-buttons{
    display: flex;
    margin-left:auto;
}
.win-buttons button{
    width:46px;
    justify-content: center;
}
.win-buttons svg{
    width:11px;
    height:11px;
    fill: none;
    stroke: #000;
}

/* tabs */
.tabbar{
    height:32px;
    display: flex;
    background: #cbcbcb;
    color: #5f5f5f;
}
.quick{
    width:197px;
    display: flex;
    align-items: center;
    gap:19px;
    padding-left:9px;
}
.off{
    color: #929292;
}
.tab{
    flex: 1;
    display: flex;
    align-items: center;
    margin-top:4px;
    padding-right:6px;
    border-radius: 4px 4px 0 0;
    background: #f1f1f1;
}
.tab-title{
    flex: 1;
    display: flex;
    align-items: center;
    justify-content: center;
    gap:4px;
    font-size: 12px;
    font-weight: bold;
}
.tab button svg{
    width:10px;
    height:10px;
    stroke: #666;
    stroke-width: 1.5;
}
.new-tab{
    width:28px;
    margin:4px 0 0 4px;
    justify-content: center;
    border-radius: 4px 4px 0 0;
    background: #bababa;
}
.new-tab svg{
    width:14px;
    height:14px;
    stroke: #6c6c6c;
    stroke-width: 3;
}
.account{
    display: flex;
    align-items: center;
    padding:0 9px 0 12px;
    color: #4d4d4d;
}
.jobs{
    gap:3px;
    margin-left:17px;
}
.user{
    margin:0 20px 0 31px;
}

/* workspace */
.workspace{
    flex: 1;
    display: grid;
    grid-template-columns: 300px 1fr auto;
    grid-template-rows: auto 1fr;
    padding:4px 12px 4px 4px;
}
.toolbar{
    grid-area: 1 / 1 / 2 / 3;
    justify-self: start;
    display: flex;
    height:60px;
    background: #f1f1f1;
    font-family: Roboto, "Liberation Sans", sans-serif;
}
.grip{
    width:5px;
    height:23px;
    margin:18px 0 0 6px;
    border: solid #bbb;
    border-width: 0 1px;
}
.model{
    width:106px;
    justify-content: center;
    padding:2px 0 0 8px;
    font-weight: bold;
}
.model .caret{
    margin-left:7px;
}
.group{
    display: flex;
    flex-direction: column;
    align-items: center;
    padding:0 9px 0 8px;
    border-left: 2px solid #e1e1e1;
}
.roomy{
    padding:0 10px;
}
.icons{
    height:42px;
    display: flex;
    align-items: center;
    gap:14px;
}
.icons svg{
    width:32px;
    height:32px;
}
.wide .icons svg{
    width:30px;
    height:30px;
}
.icons .active{
    width:38px;
    height:38px;
    background: #0a94d8;
}
.group button{
    margin-top:4px;
}

/* view cube */
.viewcube{
    grid-area: 1 / 3 / 3 / 4;
    width:90px;
    height:90px;
    margin-top:7px;
}
.face{
    font: bold 8px "Open Sans", sans-serif;
    fill: #8b9097;
}
.small{
    font-size: 5px;
}
.axis{
    font: 12px "Open Sans", sans-serif;
}

/* model view */
.viewport{
    grid-area: 2 / 1 / 3 / 4;
    display: flex;
    flex-direction: column;
    align-items: center;
    justify-content: flex-end;
    padding-left:8px;
}
.scene{
    width:336px;
    height:530px;
}
.navbar{
    display: flex;
    height:24px;
    padding:0 7px 0 3px;
    background: #f1f1f1;
}
.navbar button{
    margin-right:10px;
}
.navbar .caret{
    margin-left:3px;
}
.navbar .tight{
    margin-right:5px;
}
.navbar .space{
    width:5px;
}

/* browser */
.panel{
    grid-area: 2 / 1 / 3 / 2;
    display: flex;
    flex-direction: column;
    padding-top:4px;
}
.panel-head{
    height:25px;
    display: flex;
    align-items: center;
    border: 1px solid #c6c6c6;
    background: #f1f1f1;
    color: #666;
    padding-left:4px;
}
.panel-head h2{
    flex: 1;
    margin-left:9px;
    font: 11px Roboto, "Liberation Sans", sans-serif;
}
.collapse{
    width:11px;
    height:8px;
}
.dot{
    width:9px;
    height:9px;
}
.handle{
    width:4px;
    height:11px;
    margin-left:7px;
    border: solid #888;
    border-width: 0 1px;
}
.comments{
    margin-top:auto;
    border-top: 0;
    padding-left:15px;
}
.tree{
    display: flex;
    margin-top:5px;
    padding-left:4px;
}
.scroll{
    width:6px;
    display: flex;
    align-items: flex-end;
    background: #cacaca;
}
.thumb{
    width:6px;
    height:50px;
    border: 1px solid #858585;
    border-radius: 3px 3px 0 0;
    background: #999;
}
.tree ul{
    flex: 1;
    display: flex;
    flex-direction: column;
    gap:4px;
    padding:0 0 6px 26px;
}
.tree li{
    height:20px;
    display: flex;
    align-items: center;
}
.twisty{
    width:10px;
    height:14px;
    margin-right:8px;
}
.node{
    height:20px;
    display: flex;
    align-items: center;
    padding:0 6px 0 4px;
    background: #f1f1f1;
    white-space: nowrap;
}
.node span{
    margin-left:14px;
}
.bulb{
    width:12px;
    height:16px;
    margin-right:12px;
    fill: #cfe0fb;
    stroke: #6d8dc4;
}
.bulb.on{
    fill: #ffe95a;
    stroke: #c39a1f;
}
.chain{
    margin-left:9px;
}

/* timeline */
.timeline{
    height:50px;
    border-top: 2px solid #c8c8c8;
    background: #f1f1f1;
}
.slider{
    width:62px;
    height:6px;
    margin-left:4px;
    border-radius: 0 0 4px 4px;
    background: #c8c8c8;
}
.track{
    display: flex;
    align-items: flex-start;
    padding:9px 13px 0 10px;
}
.player{
    width:132px;
    display: flex;
    gap:11px;
    padding-top:6px;
    color: #444;
}
#features{
    flex: 1;
    display: flex;
    min-width:0;
}
#features li{
    width:24px;
    height:26px;
    display: flex;
    justify-content: center;
    background: linear-gradient(#c8c8c8,#c8c8c8) 0 100% / 100% 2px no-repeat, linear-gradient(#c8c8c8,#c8c8c8) 50% 100% / 2px 7px no-repeat;
}
#features li:first-child{
    background-position: 12px 100%, 50% 100%;
}
.settings{
    padding-top:5px;
}

/* taskbar */
.taskbar{
    height:30px;
    display: flex;
    background: #0e0e0e;
    color: #fff;
    font: 12px "Open Sans", "Noto Sans", sans-serif;
}
.apps{
    display: flex;
}
.apps button{
    width:36px;
    justify-content: center;
}
.pinned{
    gap:1px;
    margin-left:3px;
}
.open{
    background: linear-gradient(#76b9ed,#76b9ed) 50% 100% / 28px 2px no-repeat;
}
.current{
    background-color: #3e3e3e;
    background-size: 100% 2px;
}
.tray{
    display: flex;
    align-items: center;
    gap:9px;
    margin-left:auto;
}
.people{
    margin-right:6px;
}
.tray time{
    margin:0 10px 0 6px;
}
.peek{
    width:5px;
    height:30px;
    margin-left:11px;
    border-left: 1px solid #555;
}
```
